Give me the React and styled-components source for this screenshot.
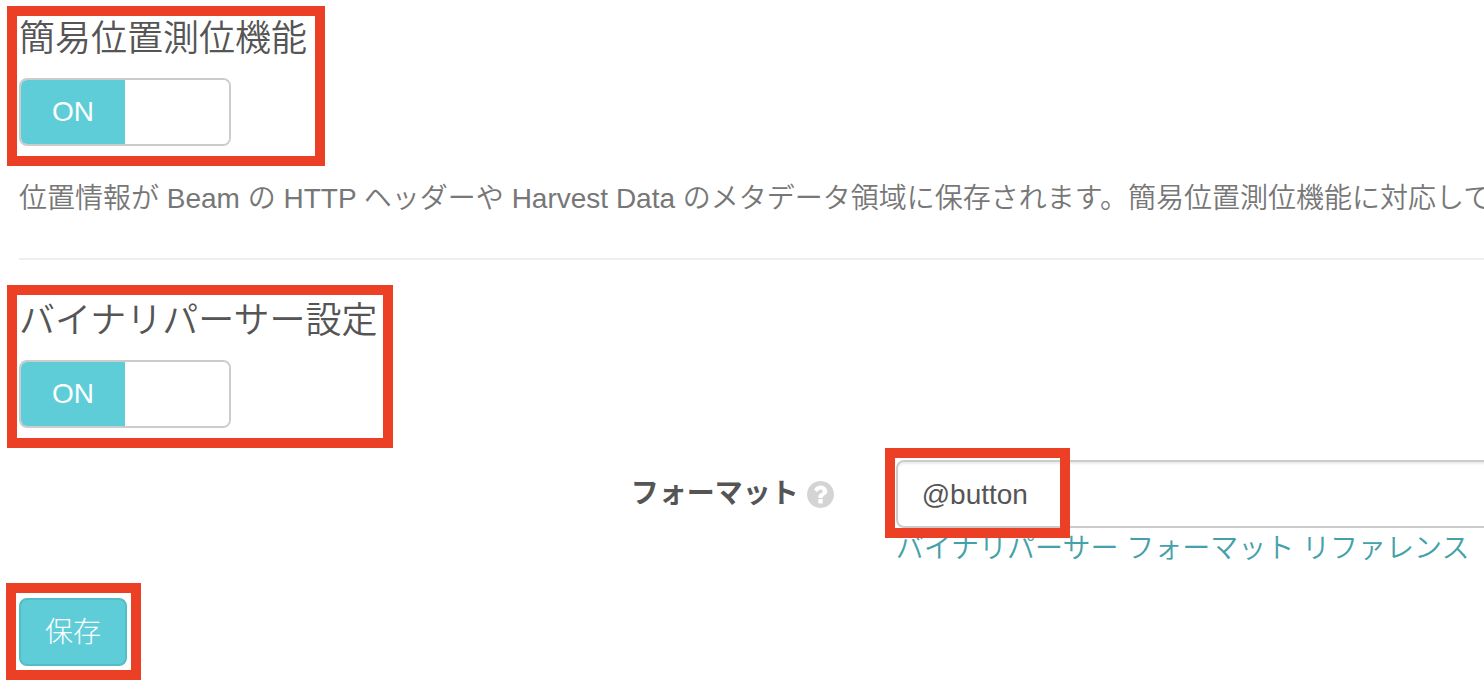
import React, { useId, useState } from "react";
import styled, { createGlobalStyle } from "styled-components";

const GlobalStyle = createGlobalStyle`
  *, *::before, *::after { box-sizing: border-box; }
  body {
    margin: 0;
    background: #fff;
    color: #555;
    font-family: "Liberation Sans", "Noto Sans CJK JP", sans-serif;
    font-size: 28px;
    line-height: 42px;
    overflow-x: hidden;
  }
`;

const Page = styled.form`
  padding: 6px 0 6px 6px;
`;

const Frame = styled.section`
  width: fit-content;
  border: 10px solid #ec4026;
`;

const SettingFrame = styled(Frame)`
  margin-left: 1px;
  padding: ${({ $top }) => $top}px ${({ $right }) => $right}px 10px 2px;
`;

const Title = styled.h2`
  margin: 0 0 16px;
  font-size: 36px;
  line-height: 46px;
  font-weight: 350;
`;

const Switch = styled.label`
  position: relative;
  display: flex;
  width: 212px;
  height: 68px;
  border: 2px solid #ccc;
  border-radius: 8px;
  overflow: hidden;
  cursor: pointer;
`;

const SwitchInput = styled.input`
  position: absolute;
  inset: 0;
  margin: 0;
  opacity: 0;
`;

const SwitchHalf = styled.span`
  flex: 1;
  display: flex;
  align-items: center;
  justify-content: center;
  background: ${({ $active }) => ($active ? "#5ecdd8" : "#fff")};
  color: ${({ $active }) => ($active ? "#fff" : "#555")};
`;

const Description = styled.p`
  margin: 12px 0 38px 13px;
  color: #777;
  font-weight: 350;
  white-space: nowrap;
  overflow: hidden;
`;

const Divider = styled.hr`
  margin: 0 0 25px 13px;
  border: 0;
  border-top: 2px solid #eee;
`;

const FormRow = styled.div`
  display: grid;
  grid-template-columns: 56% 1fr;
  column-gap: 62px;
  margin: 12px 0 13px;
`;

const LabelCell = styled.div`
  display: flex;
  justify-content: flex-end;
  align-items: center;
  gap: 8px;
  height: 68px;
`;

const FieldLabel = styled.label`
  font-weight: 700;
`;

const HelpButton = styled.button`
  display: flex;
  padding: 0;
  border: 0;
  background: none;
  color: #d4d4d4;
  cursor: pointer;
`;

const FieldCell = styled.div`
  position: relative;
  min-width: 0;
`;

const TextInput = styled.input`
  display: block;
  width: calc(100% + 8px);
  height: 68px;
  padding: 2px 24px 0;
  border: 2px solid #ccc;
  border-radius: 8px;
  box-shadow: inset 0 2px 2px rgba(0, 0, 0, 0.075);
  background: #fff;
  color: #555;
  font: inherit;
`;

const FieldHighlight = styled.div`
  position: absolute;
  top: -12px;
  left: -11px;
  width: 185px;
  height: 90px;
  border: 10px solid #ec4026;
  pointer-events: none;
`;

const ReferenceLink = styled.a`
  display: block;
  color: #43a1a9;
  font-weight: 350;
  text-decoration: none;
  white-space: nowrap;
`;

const SaveFrame = styled(Frame)`
  padding: 5px 4px 4px 3px;
`;

const SaveButton = styled.button`
  display: block;
  height: 68px;
  padding: 2px 24px 0;
  border: 2px solid #54bdc8;
  border-radius: 8px;
  background: #5ecdd8;
  color: #fff;
  font: inherit;
  font-weight: 300;
  cursor: pointer;
`;

function QuestionIcon() {
  return (
    <svg width="27" height="27" viewBox="128 128 1536 1536" fill="currentColor" aria-hidden="true">
      <path d="M1024 1376v-192q0-14-9-23t-23-9h-192q-14 0-23 9t-9 23v192q0 14 9 23t23 9h192q14 0 23-9t9-23zm256-672q0-88-55.500-163t-138.500-116-170-41q-243 0-371 213-15 24 8 42l132 100q7 6 19 6 16 0 25-12 53-68 86-92 34-24 86-24 48 0 85.500 26t37.500 59q0 38-20 61t-68 45q-63 28-115.500 86.500t-52.500 125.500v36q0 14 9 23t23 9h192q14 0 23-9t9-23q0-19 21.500-49.500t54.500-49.500q32-18 49-28.500t46-35 44.500-48 28-60.500 12.500-81zm384 192q0 209-103 385.500t-279.500 279.500-385.500 103-385.500-103-279.500-279.500-103-385.500 103-385.500 279.500-279.500 385.500-103 385.500 103 279.500 279.500 103 385.500z" />
    </svg>
  );
}

function Setting({ title, top, right }) {
  const id = useId();
  const [on, setOn] = useState(true);
  return (
    <SettingFrame $top={top} $right={right}>
      <Title id={id}>{title}</Title>
      <Switch>
        <SwitchInput
          type="checkbox"
          role="switch"
          aria-labelledby={id}
          checked={on}
          onChange={(e) => setOn(e.target.checked)}
        />
        <SwitchHalf $active={on}>{on ? "ON" : ""}</SwitchHalf>
        <SwitchHalf>{on ? "" : "OFF"}</SwitchHalf>
      </Switch>
    </SettingFrame>
  );
}

export default function App() {
  return (
    <>
      <GlobalStyle />
      <Page onSubmit={(e) => e.preventDefault()}>
        <Setting title="簡易位置測位機能" top={0} right={8} />
        <Description>
          位置情報が Beam の HTTP ヘッダーや Harvest Data のメタデータ領域に保存されます。簡易位置測位機能に対応して
        </Description>
        <Divider />
        <Setting title="バイナリパーサー設定" top={3} right={5} />
        <FormRow>
          <LabelCell>
            <FieldLabel htmlFor="format">フォーマット</FieldLabel>
            <HelpButton type="button" aria-label="ヘルプ">
              <QuestionIcon />
            </HelpButton>
          </LabelCell>
          <FieldCell>
            <TextInput id="format" type="text" defaultValue="@button" />
            <ReferenceLink href="#reference">バイナリパーサー フォーマット リファレンス</ReferenceLink>
            <FieldHighlight />
          </FieldCell>
        </FormRow>
        <SaveFrame>
          <SaveButton type="submit">保存</SaveButton>
        </SaveFrame>
      </Page>
    </>
  );
}
